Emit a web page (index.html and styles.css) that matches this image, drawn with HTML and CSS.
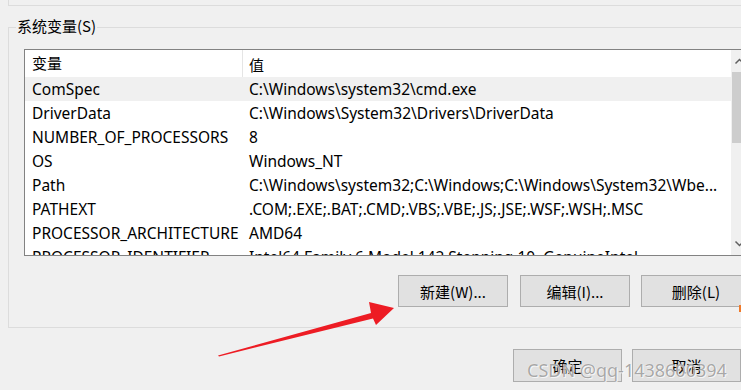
FILE: index.html
```html
<!DOCTYPE html>
<html lang="zh">
<head>
<meta charset="utf-8">
<link rel="stylesheet" href="styles.css">
</head>
<body>
<div class="prev"></div>
<div class="group">
  <span class="legend">系统变量(S)</span>
  <div class="list">
    <div class="table">
      <div class="row head"><span class="c1">变量</span><span class="c2">值</span></div>
      <div class="row sel"><span class="c1">ComSpec</span><span class="c2">C:\Windows\system32\cmd.exe</span></div>
      <div class="row"><span class="c1">DriverData</span><span class="c2">C:\Windows\System32\Drivers\DriverData</span></div>
      <div class="row"><span class="c1">NUMBER_OF_PROCESSORS</span><span class="c2">8</span></div>
      <div class="row"><span class="c1">OS</span><span class="c2">Windows_NT</span></div>
      <div class="row"><span class="c1">Path</span><span class="c2">C:\Windows\system32;C:\Windows;C:\Windows\System32\Wbe...</span></div>
      <div class="row"><span class="c1">PATHEXT</span><span class="c2">.COM;.EXE;.BAT;.CMD;.VBS;.VBE;.JS;.JSE;.WSF;.WSH;.MSC</span></div>
      <div class="row"><span class="c1">PROCESSOR_ARCHITECTURE</span><span class="c2">AMD64</span></div>
      <div class="row"><span class="c1">PROCESSOR_IDENTIFIER</span><span class="c2">Intel64 Family 6 Model 142 Stepping 10, GenuineIntel</span></div>
    </div>
    <div class="scrollbar">
      <div class="sb-btn"><svg width="17" height="22" viewBox="0 0 17 22"><path d="M4.5 13.5 L8.5 9.5 L12.5 13.5" fill="none" stroke="#606060" stroke-width="1.5"/></svg></div>
      <div class="thumb"></div>
      <div class="sb-track"></div>
      <div class="sb-btn"><svg width="17" height="22" viewBox="0 0 17 22"><path d="M4.5 8.5 L8.5 12.5 L12.5 8.5" fill="none" stroke="#606060" stroke-width="1.5"/></svg></div>
    </div>
  </div>
  <div class="buttons">
    <button class="btn">新建(W)...</button>
    <button class="btn">编辑(I)...</button>
    <button class="btn">删除(L)</button>
  </div>
</div>
<div class="footer">
  <button class="btn tall">确定</button>
  <button class="btn tall">取消</button>
</div>
<div class="watermark">CSDN @qq-1438600394</div>
<svg class="overlay" width="741" height="390" viewBox="0 0 741 390">
  <polygon points="218,355.5 371,313 369,302 394,308 376,325 373,318.5 219,356.5" fill="#ed1c24"/>
  <rect x="739" y="305" width="2" height="7" fill="#f07a2a"/>
</svg>
</body>
</html>
```

FILE: styles.css
```css
html, body {
  margin: 0;
  padding: 0;
}
body {
  width: 741px;
  height: 390px;
  overflow: hidden;
  background: #f0f0f0;
  position: relative;
  font-family: "Noto Sans", "Noto Sans CJK SC", sans-serif;
  font-size: 15.5px;
  color: #000;
}
.prev {
  height: 5px;
  margin-left: 8px;
  width: 800px;
  border-left: 1px solid #dcdcdc;
  border-bottom: 1px solid #dcdcdc;
}
.group {
  position: relative;
  margin-top: 21px;
  margin-left: 8px;
  width: 780px;
  box-sizing: border-box;
  border: 1px solid #dcdcdc;
  padding: 21px 0 20px 15px;
}
.legend {
  position: absolute;
  left: 7px;
  top: -12px;
  padding: 0 1px;
  background: #f0f0f0;
  font-family: "Noto Sans CJK SC", sans-serif;
  font-size: 15px;
  line-height: 20px;
}
.list {
  display: flex;
  width: 725px;
  height: 207px;
  box-sizing: border-box;
  border: 1px solid #828282;
  background: #fff;
}
.table {
  flex: 1;
  overflow: hidden;
}
.row {
  display: flex;
  height: 24px;
  align-items: center;
  white-space: nowrap;
}
.row.head {
  height: 27px;
  padding-top: 2px;
  box-sizing: border-box;
  font-family: "Noto Sans CJK SC", sans-serif;
  font-size: 15px;
}
.row.sel {
  background: #f0f0f0;
}
.c1 {
  width: 210px;
  padding-left: 7px;
  flex: none;
  box-sizing: content-box;
}
.c2 {
  padding-left: 7px;
}
.head .c1 {
  border-right: 1px solid #e5e5e5;
  height: 27px;
  line-height: 25px;
  margin-top: -2px;
  padding-top: 0;
}
.head .c2 {
  padding-left: 6px;
}
.scrollbar {
  width: 17px;
  flex: none;
  background: #f0f0f0;
  display: flex;
  flex-direction: column;
}
.sb-btn {
  height: 22px;
  flex: none;
}
.sb-btn svg {
  display: block;
}
.thumb {
  height: 71px;
  margin: 0 1px;
  background: #cdcdcd;
  flex: none;
}
.sb-track {
  flex: 1;
}
.buttons {
  display: flex;
  gap: 12px;
  margin-top: 19px;
  margin-left: 374px;
}
.btn {
  width: 110px;
  height: 32px;
  box-sizing: border-box;
  border: 1px solid #adadad;
  background: #e1e1e1;
  font-family: "Noto Sans CJK SC", sans-serif;
  font-size: 15px;
  color: #000;
  padding: 0;
  margin: 0;
}
.buttons .btn:nth-child(3) {
  margin-left: -1px;
}
.footer {
  display: flex;
  gap: 10px;
  margin-top: 21px;
  margin-left: 513px;
}
.btn.tall {
  width: 111px;
  height: 33px;
}
.watermark {
  position: absolute;
  left: 527px;
  top: 355px;
  font-family: "Noto Sans", sans-serif;
  font-size: 18px;
  color: rgba(110, 110, 110, 0.6);
  text-shadow: 0 0 1px #fff, 1px 1px 0 rgba(255,255,255,0.7);
  white-space: nowrap;
  line-height: 30px;
}
.overlay {
  position: absolute;
  left: 0;
  top: 0;
  pointer-events: none;
}
```
